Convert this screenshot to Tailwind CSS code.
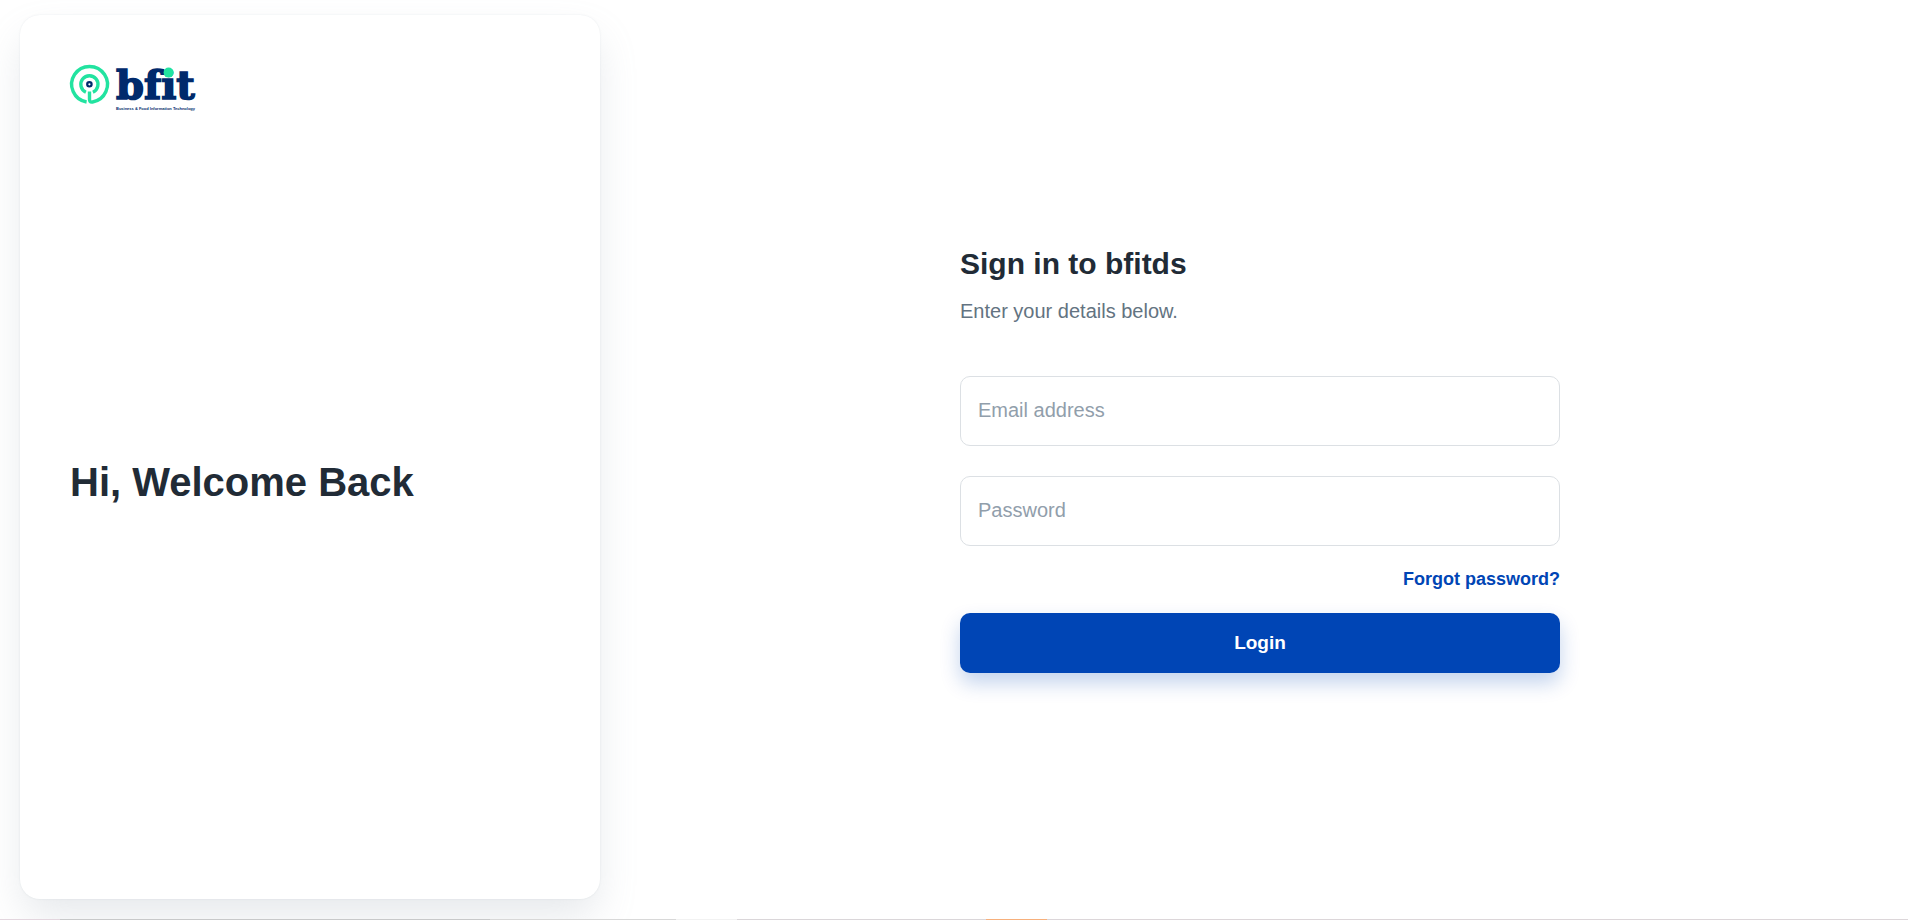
<!DOCTYPE html>
<html lang="en">
<head>
    <meta charset="UTF-8">
    <meta name="viewport" content="width=device-width, initial-scale=1.0">
    <title>Login | bfitds</title>
    <script src="https://cdn.jsdelivr.net/npm/@tailwindcss/browser@4"></script>
</head>
<body class="bg-white font-['Liberation_Sans',Arial,sans-serif] text-[#212b36]">
    <div class="flex min-h-screen flex-col">
        <main class="flex flex-1 pt-[15px] pb-5 pl-5">
            <!-- Welcome card -->
            <section class="flex w-[580px] shrink-0 flex-col rounded-[20px] bg-white p-[50px] shadow-[0_0_2px_rgba(145,158,171,0.2),0_20px_40px_-4px_rgba(145,158,171,0.24)]">
                <a href="#" aria-label="bfit" class="h-[50px] w-[126px]">
                    <svg class="h-[50px] w-[126px] overflow-visible" viewBox="0 0 126 50">
                        <g fill="none" stroke="#22e3a0" stroke-width="3.4">
                            <path d="M16.6 37A17.9 17.9 0 1 1 22.5 37C20 37.4 19.5 36 19.5 34V26.5" />
                            <path d="M15.9 27.2A8.6 8.6 0 1 1 22.9 27.2" />
                        </g>
                        <circle cx="19.4" cy="19.3" r="2.2" fill="#fff" stroke="#002a6c" stroke-width="2.2" />
                        <text x="46" y="34" class="[font-variant-ligatures:none]" font-family="DejaVu Serif, serif" font-size="40" font-weight="700" fill="#002a6c" stroke="#002a6c" stroke-width="1.6">bfit</text>
                        <circle cx="98.6" cy="7.6" r="5" fill="#22e3a0" />
                        <text x="46" y="45" font-family="Liberation Sans, Arial, sans-serif" font-size="4" font-weight="700" fill="#002a6c">Business &amp; Food Information Technology</text>
                    </svg>
                </a>
                <h1 class="my-auto text-[40px] leading-[60px] font-bold">Hi, Welcome Back</h1>
            </section>

            <!-- Sign in form -->
            <section class="flex flex-1 items-center justify-center pr-2 pl-5">
                <form class="w-full max-w-[600px]">
                    <h2 class="text-[30px] leading-[45px] font-bold">Sign in to bfitds</h2>
                    <p class="mt-[10px] text-xl leading-[30px] text-[#637381]">Enter your details below.</p>

                    <div class="mt-[50px] flex flex-col gap-[30px]">
                        <input type="email" id="email" aria-label="Email address" placeholder="Email address"
                               class="h-[70px] w-full rounded-[10px] border border-[#dce0e4] px-[17px] pb-[2px] text-xl placeholder:text-[#919eab] focus:border-[#0045b5] focus:outline-none">
                        <input type="password" id="password" aria-label="Password" placeholder="Password"
                               class="h-[70px] w-full rounded-[10px] border border-[#dce0e4] px-[17px] pb-[2px] text-xl placeholder:text-[#919eab] focus:border-[#0045b5] focus:outline-none">
                    </div>

                    <div class="my-5 flex justify-end">
                        <a href="#" class="text-lg leading-[27px] font-bold text-[#0045b5] hover:underline">Forgot password?</a>
                    </div>

                    <button type="submit" class="h-[60px] w-full rounded-[10px] bg-[#0045b5] text-[19px] font-bold text-white shadow-[0_10px_20px_rgba(0,69,181,0.24)]">Login</button>
                </form>
            </section>
        </main>

        <!-- Bottom strip -->
        <footer class="flex h-px">
            <div class="w-[60px] bg-[#e3d6de]"></div>
            <div class="w-[430px] bg-[#c8c9ca]"></div>
            <div class="w-[186px] bg-[#d8d8d8]"></div>
            <div class="w-[61px] bg-[#f2f2f2]"></div>
            <div class="w-[249px] bg-[#dad6d9]"></div>
            <div class="w-[61px] bg-[#f7b07c]"></div>
            <div class="flex-1 bg-[#dcd6d9]"></div>
        </footer>
    </div>
</body>
</html>
